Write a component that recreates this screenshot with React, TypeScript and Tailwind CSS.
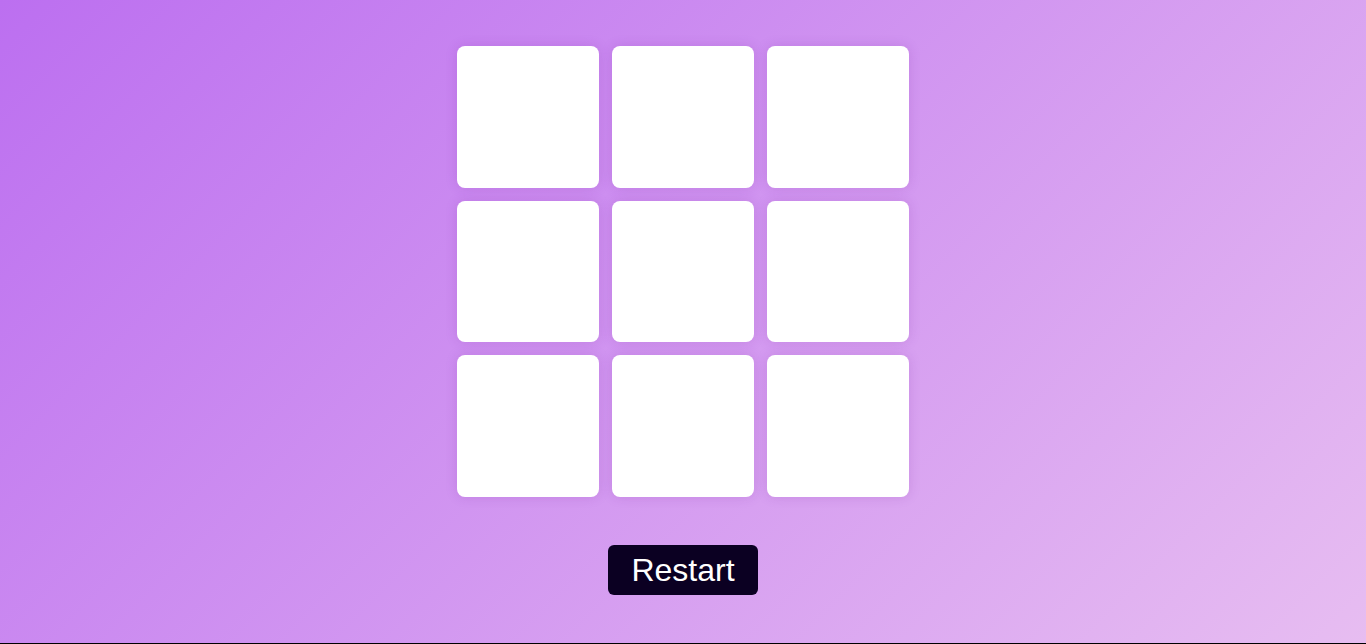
import { useState } from 'react';

export default function App() {
    const [cells, setCells] = useState<string[]>(Array(9).fill(''));

    return (
        <div className="h-[644px] bg-black" style={{ fontFamily: '"Liberation Sans", Arial, sans-serif' }}>
            <div className="h-[643px] w-full bg-[linear-gradient(135deg,#bc6ff0,#e7bdf1)] flex flex-col items-center pt-[46px]">
                {/* Board */}
                <div className="grid grid-cols-[repeat(3,142px)] gap-x-[13px] gap-y-[13px]">
                    {cells.map((c, i) => (
                        <button
                            key={i}
                            onClick={() => setCells(prev => prev.map((v, j) => (j === i && !v ? 'X' : v)))}
                            className="h-[141.5px] w-[142px] bg-white rounded-lg shadow-[0_0_12px_rgba(120,40,160,0.18)] text-5xl font-bold text-[#0b0022]"
                        >
                            {c}
                        </button>
                    ))}
                </div>

                {/* Restart */}
                <button
                    onClick={() => setCells(Array(9).fill(''))}
                    className="mt-[48px] h-[50px] w-[150px] rounded-md bg-[#0b0022] text-white text-[32px] leading-none"
                >
                    Restart
                </button>
            </div>
        </div>
    );
}
